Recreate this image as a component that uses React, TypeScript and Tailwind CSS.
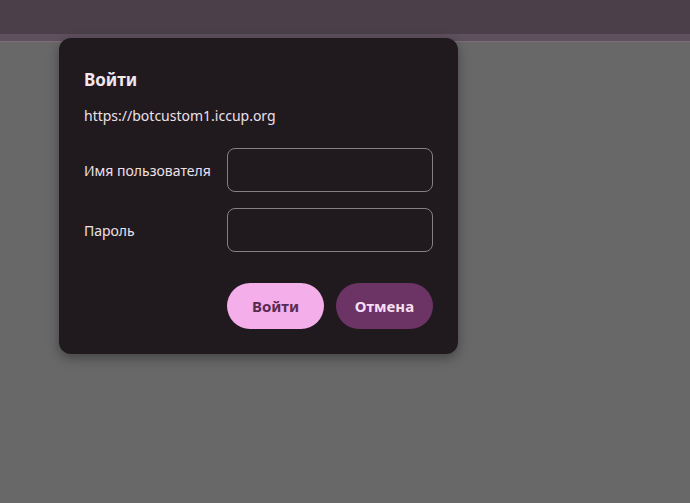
import { useState } from "react";

function LoginDialog() {
  const [username, setUsername] = useState("");
  const [password, setPassword] = useState("");

  return (
    <div className="absolute left-[59px] top-[38px] w-[399px] rounded-[12px] bg-[#201a1f] px-[25px] pt-[30px] pb-[25px] text-[#ece0ea] shadow-[0_4px_12px_rgba(0,0,0,0.35)]">
      <h2 className="text-[17px] font-bold leading-[24px] text-[#f2e6ef]">Войти</h2>
      <p className="mt-[14px] text-[14px] leading-[20px]">https://botcustom1.iccup.org</p>

      <div className="mt-[22px] flex flex-col gap-[16px]">
        <div className="flex items-center">
          <label className="w-[143px] text-[14px]">Имя пользователя</label>
          <input
            value={username}
            onChange={(e) => setUsername(e.target.value)}
            className="h-[44px] w-[206px] rounded-[8px] border border-[#858085] bg-transparent px-3 text-[14px] outline-none"
          />
        </div>
        <div className="flex items-center">
          <label className="w-[143px] text-[14px]">Пароль</label>
          <input
            type="password"
            value={password}
            onChange={(e) => setPassword(e.target.value)}
            className="h-[44px] w-[206px] rounded-[8px] border border-[#858085] bg-transparent px-3 text-[14px] outline-none"
          />
        </div>
      </div>

      <div className="mt-[31px] flex justify-end gap-[12px]">
        <button className="h-[46px] w-[97px] rounded-full bg-[#f4aeea] text-[15px] font-bold text-[#5a2a52]">
          Войти
        </button>
        <button className="h-[46px] w-[97px] rounded-full bg-[#6b3464] text-[15px] font-bold text-[#f6dff0]">
          Отмена
        </button>
      </div>
    </div>
  );
}

export default function App() {
  return (
    <div
      className="relative flex h-[503px] w-[690px] flex-col overflow-hidden bg-[#686868]"
      style={{ fontFamily: '"Noto Sans", "Open Sans", sans-serif' }}
    >
      <header className="h-[34px] bg-[#4b404a]" />
      <div className="h-[8px] border-b border-[#7a6e78] bg-[#5e505d]" />
      <LoginDialog />
    </div>
  );
}
